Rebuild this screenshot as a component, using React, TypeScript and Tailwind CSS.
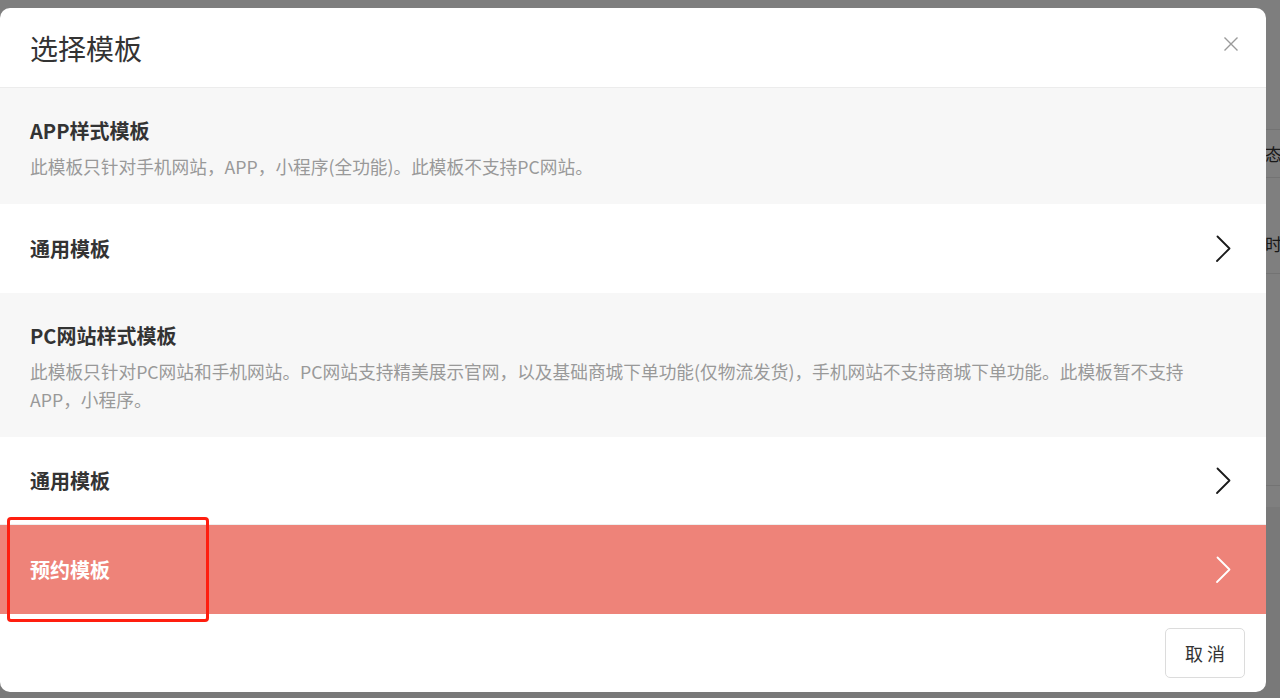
import React from "react";

const FONT = "font-['Noto_Sans_CJK_SC','Noto_Sans',sans-serif]";

const Chevron = ({ color }: { color: string }) => (
  <svg width="16" height="28" viewBox="0 0 16 28" fill="none">
    <path
      d="M2.5 1.5 L14.5 13.5 L2 26"
      stroke={color}
      strokeWidth="1.8"
      strokeLinecap="round"
      strokeLinejoin="round"
    />
  </svg>
);

const LinkRow = ({ label, active, short }: { label: string; active?: boolean; short?: boolean }) => (
  <div
    className={
      active
        ? "flex h-[89px] shrink-0 items-center justify-between bg-[#ee8379] pl-[30px] pr-[35px]"
        : short
        ? "flex h-[87px] shrink-0 items-center justify-between bg-white pl-[30px] pr-[35px]"
        : "flex h-[89px] shrink-0 items-center justify-between bg-white pl-[30px] pr-[35px]"
    }
  >
    <span
      className={
        active
          ? "text-[20px] font-bold leading-[28px] text-white"
          : "text-[20px] font-bold leading-[28px] text-[#333]"
      }
    >
      {label}
    </span>
    <Chevron color={active ? "#ffffff" : "#1a1a1a"} />
  </div>
);

const Section = ({ title, desc }: { title: string; desc: string }) => (
  <div className="shrink-0 bg-[#f7f7f7] pb-[24px] pl-[30px] pr-[50px] pt-[29px]">
    <div className="text-[20px] font-bold leading-[28px] text-[#333]">{title}</div>
    <div className="mt-[7px] text-[17.7px] leading-[28px] text-[#999]">{desc}</div>
  </div>
);

export default function App() {
  return (
    <div className={`relative h-[698px] w-full overflow-hidden bg-[#f7f7f7] ${FONT}`}>
      {/* underlying page */}
      <div className="flex h-full flex-col">
        <div className="h-[129px] bg-[#fcfcfc]" />
        <div className="flex h-[49px] items-center overflow-hidden whitespace-nowrap border-y border-[#e6e6e6] bg-white pl-[1248px] text-[17px] text-[#333]">
          状态
        </div>
        <div className="flex h-[96px] items-center overflow-hidden whitespace-nowrap border-b border-[#e6e6e6] bg-white pl-[1265px] pt-[36px] text-[17px] text-[#333]">
          时间
        </div>
        <div className="h-[212px] border-b border-[#e6e6e6] bg-white" />
        <div className="h-[21px] bg-white" />
        <div className="flex-1 bg-[#f2f2f2]" />
      </div>

      {/* overlay */}
      <div className="absolute inset-0 bg-black/50" />

      {/* modal */}
      <div className="absolute left-0 top-[8px] flex h-[684px] w-[1266px] flex-col overflow-hidden rounded-[10px] bg-white">
        <div className="flex h-[80px] shrink-0 items-center justify-between border-b border-[#ececec] pl-[30px] pr-[27px]">
          <span className="text-[28px] leading-[32px] text-[#333]">选择模板</span>
          <svg width="16" height="16" viewBox="0 0 16 16" className="mb-[8px]" fill="none">
            <path d="M1.5 1.5 L14.5 14.5 M14.5 1.5 L1.5 14.5" stroke="#9a9a9a" strokeWidth="1.4" />
          </svg>
        </div>

        <Section
          title="APP样式模板"
          desc="此模板只针对手机网站，APP，小程序(全功能)。此模板不支持PC网站。"
        />
        <LinkRow label="通用模板" />
        <Section
          title="PC网站样式模板"
          desc="此模板只针对PC网站和手机网站。PC网站支持精美展示官网，以及基础商城下单功能(仅物流发货)，手机网站不支持商城下单功能。此模板暂不支持APP，小程序。"
        />
        <LinkRow label="通用模板" short />
        <div className="h-px shrink-0 bg-[#eeeeee]" />
        <LinkRow label="预约模板" active />

        <div className="flex flex-1 justify-end pr-[21px] pt-[14px]">
          <button className="h-[50px] w-[80px] rounded-[5px] border border-[#dcdcdc] bg-white text-[18px] leading-[24px] text-[#333]">
            取 消
          </button>
        </div>
      </div>

      {/* annotation */}
      <div className="pointer-events-none absolute left-[7px] top-[517px] h-[105px] w-[202px] rounded-[4px] border-[3px] border-[#ff1e0f]" />
    </div>
  );
}
